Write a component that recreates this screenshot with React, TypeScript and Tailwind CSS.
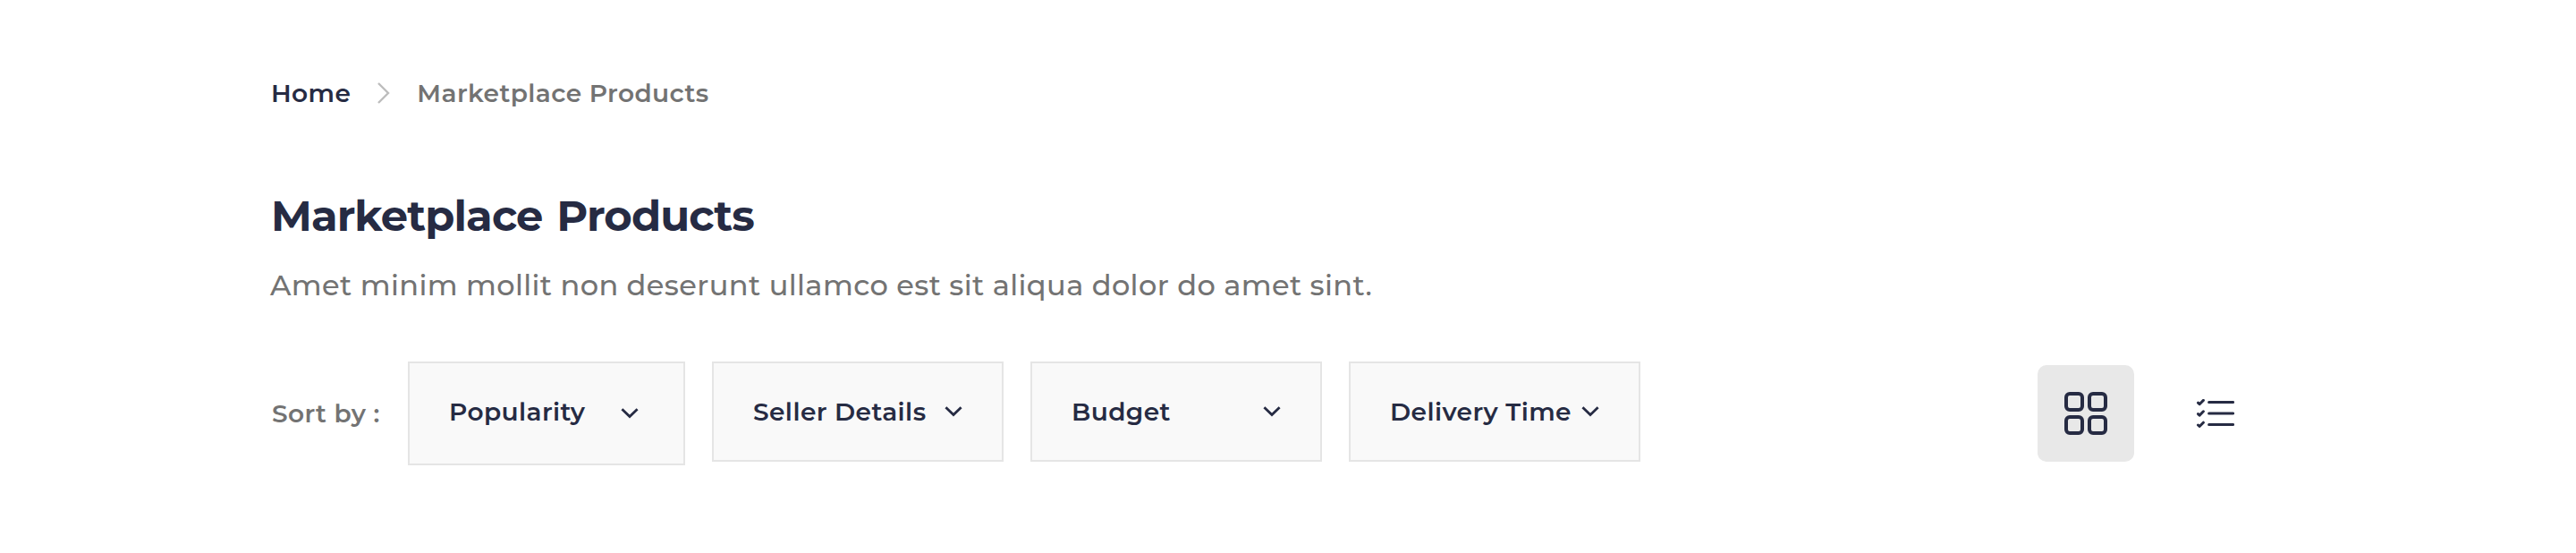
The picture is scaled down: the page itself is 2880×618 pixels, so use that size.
type Filter = { label: string; box: string; chevron: string };

const filters: Filter[] = [
  { label: "Popularity", box: "w-[310px] h-[116px] pr-[50px]", chevron: "mt-[13px]" },
  { label: "Seller Details", box: "w-[326px] h-28 pr-11", chevron: "mt-[11px]" },
  { label: "Budget", box: "w-[326px] h-28 pr-11", chevron: "mt-[11px]" },
  { label: "Delivery Time", box: "w-[326px] h-28 pr-11", chevron: "mt-[11px]" },
];

function ChevronDown({ className }: { className: string }) {
  return (
    <svg className={`h-3 w-5 shrink-0 ${className}`} viewBox="0 0 20 12" fill="none" stroke="currentColor" strokeWidth="2.8">
      <path d="M1.4 1.3 10 9.6l8.6-8.3" />
    </svg>
  );
}

function FilterSelect({ label, box, chevron }: Filter) {
  return (
    <button className={`flex items-start justify-between whitespace-nowrap border-2 border-[#e5e5e5] bg-[#f9f9f9] pl-11 pt-[37px] text-[#262b43] ${box}`}>
      <span>{label}</span>
      <ChevronDown className={chevron} />
    </button>
  );
}

function GridIcon() {
  return (
    <svg className="size-12" viewBox="0 0 48 48" fill="none" stroke="currentColor" strokeWidth="4">
      <rect x="2" y="2" width="18" height="18" rx="4" />
      <rect x="28" y="2" width="18" height="18" rx="4" />
      <rect x="2" y="28" width="18" height="18" rx="4" />
      <rect x="28" y="28" width="18" height="18" rx="4" />
    </svg>
  );
}

function ChecklistIcon() {
  return (
    <svg className="h-8 w-[42px]" viewBox="0 0 42 32" fill="none" stroke="currentColor" strokeWidth="3" strokeLinecap="round" strokeLinejoin="round">
      <path strokeWidth="3" d="m1.5 4.2 1.6 1.5L7.4 1.4M1.5 16.6l1.6 1.5 4.3-4.3M1.5 29l1.6 1.5 4.3-4.3" />
      <path d="M13.6 3.5h27M13.6 16h27M13.6 28.5h27" />
    </svg>
  );
}

export default function App() {
  return (
    <main className="h-[618px] w-[2880px] bg-white pl-[302px] pr-[382px] pt-[87px] font-['Montserrat','Inter',sans-serif] text-[28px] font-semibold leading-[34px] tracking-[0.42px] text-[#737373]">
      <nav className="flex items-start pl-px">
        <a className="text-[#262b43]">Home</a>
        <svg className="ml-[30px] mt-[5px] h-6 w-3.5" viewBox="0 0 14 24" fill="none" stroke="#bdbdbd" strokeWidth="2.4">
          <path d="m1 1 11 11L1 23" />
        </svg>
        <span className="ml-[30px]">Marketplace Products</span>
      </nav>

      <h1 className="mt-[91px] pl-px text-[48px] font-bold leading-[58px] tracking-[-0.88px] [word-spacing:3px] text-[#262b43]">Marketplace Products</h1>
      <p className="mt-[29px] text-[32px] font-medium leading-10 tracking-[0.4px]">
        Amet minim mollit non deserunt ullamco est sit aliqua dolor do amet sint.
      </p>

      <section className="mt-[65px] flex items-start justify-between">
        <div className="flex items-start">
          <span className="w-[154px] whitespace-nowrap pl-0.5 pt-[41px]">Sort by :</span>
          <div className="flex items-start gap-[30px]">
            {filters.map((filter) => (
              <FilterSelect key={filter.label} {...filter} />
            ))}
          </div>
        </div>
        <div className="mt-1 flex items-center gap-[70px] text-[#262b43]">
          <button className="flex size-[108px] items-center justify-center rounded-[10px] bg-[#e8e8e8]" aria-label="Grid view">
            <GridIcon />
          </button>
          <button aria-label="List view">
            <ChecklistIcon />
          </button>
        </div>
      </section>
    </main>
  );
}
